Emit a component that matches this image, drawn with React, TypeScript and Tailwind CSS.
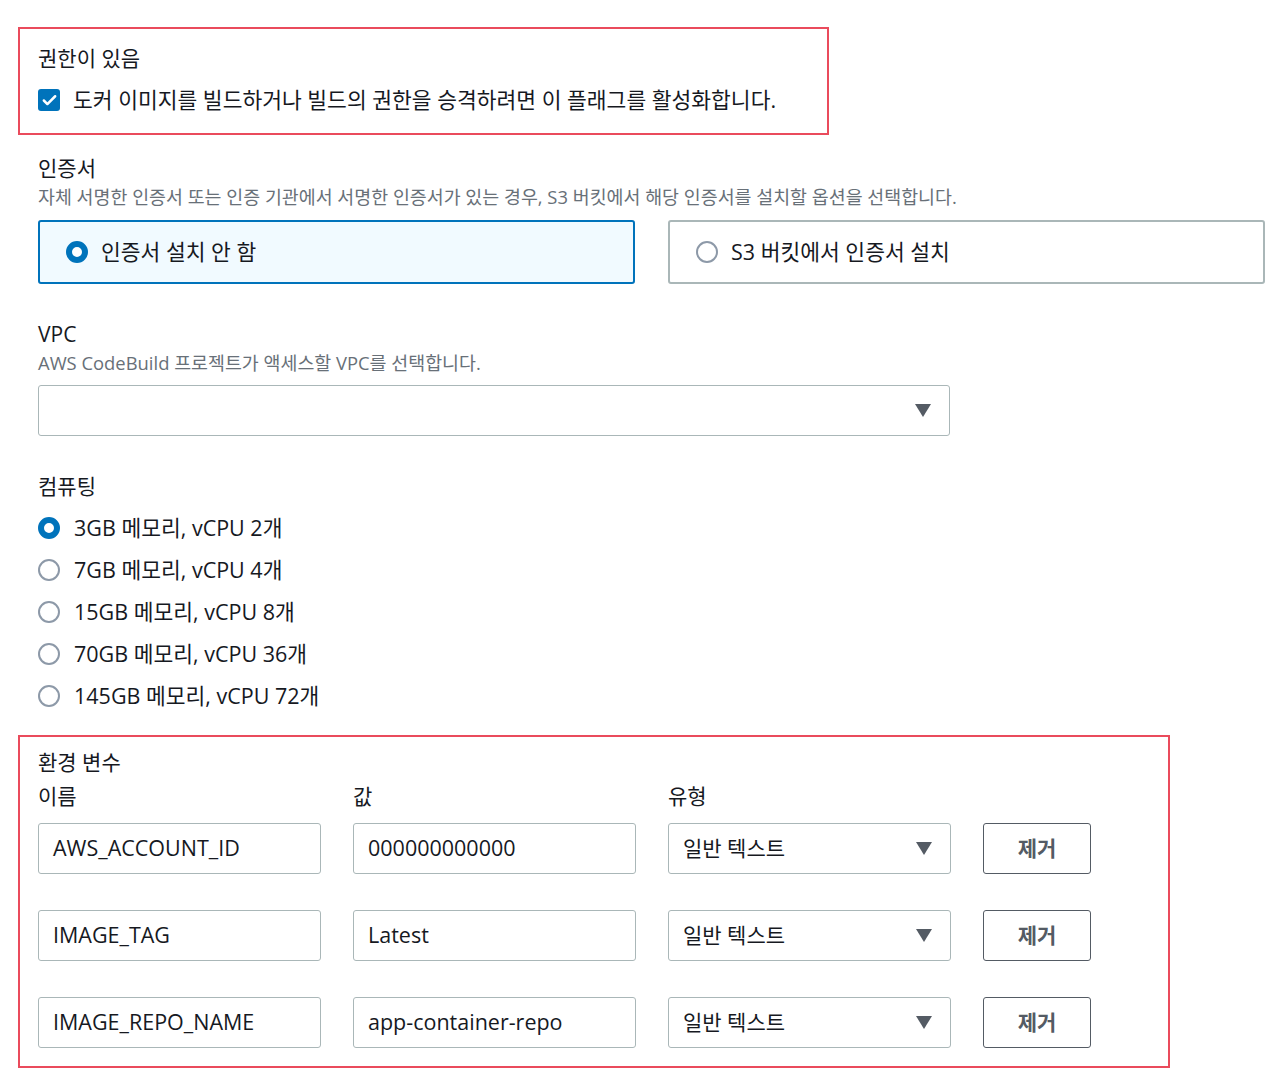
import { Check } from "lucide-react";

const font = { fontFamily: '"Open Sans", "Noto Sans CJK KR", sans-serif' };

const computeOptions = [
  "3GB 메모리, vCPU 2개",
  "7GB 메모리, vCPU 4개",
  "15GB 메모리, vCPU 8개",
  "70GB 메모리, vCPU 36개",
  "145GB 메모리, vCPU 72개",
];

const envVars = [
  { name: "AWS_ACCOUNT_ID", value: "000000000000" },
  { name: "IMAGE_TAG", value: "Latest" },
  { name: "IMAGE_REPO_NAME", value: "app-container-repo" },
];

function Radio({ checked }: { checked?: boolean }) {
  return checked ? (
    <span className="h-[22px] w-[22px] shrink-0 rounded-full border-[6px] border-[#0073bb] bg-white" />
  ) : (
    <span className="h-[22px] w-[22px] shrink-0 rounded-full border-2 border-[#8d99a8] bg-white" />
  );
}

function Caret() {
  return (
    <svg width="16" height="13" viewBox="0 0 16 13" aria-hidden>
      <path d="M0 0h16L8 13z" fill="#545b64" />
    </svg>
  );
}

function SelectBox({ text, width }: { text?: string; width: string }) {
  return (
    <div className={`flex h-[51px] items-center justify-between rounded-[3px] border border-[#aab7b8] bg-white pl-[14px] pr-[18px] ${width}`}>
      <span className="text-[21px] text-[#16191f]">{text}</span>
      <Caret />
    </div>
  );
}

function TextBox({ text }: { text: string }) {
  return (
    <div className="flex h-[51px] w-[283px] items-center rounded-[3px] border border-[#aab7b8] bg-white px-[14px] text-[21.5px] text-[#16191f]">
      {text}
    </div>
  );
}

export default function App() {
  return (
    <div className="min-h-[1091px] bg-white pl-[18px] pt-[27px] text-[#16191f]" style={font}>
      <div className="h-[108px] w-[811px] border-2 border-[#ea4b5c] pl-[18px] pt-[14px]">
        <p className="text-[21px] leading-[30px]">권한이 있음</p>
        <div className="mt-[12px] flex items-center gap-[13px]">
          <span className="flex h-[22px] w-[22px] items-center justify-center rounded-[3px] bg-[#0073bb]">
            <Check className="h-[17px] w-[17px] text-white" strokeWidth={3.5} />
          </span>
          <span className="text-[21.5px] leading-[30px]">도커 이미지를 빌드하거나 빌드의 권한을 승격하려면 이 플래그를 활성화합니다.</span>
        </div>
      </div>

      <div className="pl-[20px]">
        <div className="mt-[18px]">
          <p className="text-[21px] leading-[30px]">인증서</p>
          <p className="text-[18.4px] leading-[28px] text-[#687078]">
            자체 서명한 인증서 또는 인증 기관에서 서명한 인증서가 있는 경우, S3 버킷에서 해당 인증서를 설치할 옵션을 선택합니다.
          </p>
          <div className="mt-[9px] flex gap-[33px]">
            <div className="flex h-[64px] w-[597px] items-center gap-[13px] rounded-[3px] border-2 border-[#0073bb] bg-[#f1faff] pl-[26px]">
              <Radio checked />
              <span className="text-[21.5px]">인증서 설치 안 함</span>
            </div>
            <div className="flex h-[64px] w-[597px] items-center gap-[13px] rounded-[3px] border-2 border-[#aab7b8] bg-white pl-[26px]">
              <Radio />
              <span className="text-[21.5px]">S3 버킷에서 인증서 설치</span>
            </div>
          </div>
        </div>

        <div className="mt-[35px]">
          <p className="text-[21px] leading-[30px]">VPC</p>
          <p className="text-[18.4px] leading-[28px] text-[#687078]">AWS CodeBuild 프로젝트가 액세스할 VPC를 선택합니다.</p>
          <div className="mt-[8px]">
            <SelectBox width="w-[912px]" />
          </div>
        </div>

        <div className="mt-[35px]">
          <p className="text-[21px] leading-[30px]">컴퓨팅</p>
          <div className="mt-[12px] flex flex-col gap-[12px]">
            {computeOptions.map((opt, i) => (
              <div key={opt} className="flex h-[30px] items-center gap-[14px]">
                <Radio checked={i === 0} />
                <span className="text-[21.5px]">{opt}</span>
              </div>
            ))}
          </div>
        </div>
      </div>

      <div className="mt-[24px] h-[333px] w-[1152px] border-2 border-[#ea4b5c] pl-[18px] pt-[10px]">
        <p className="text-[21px] leading-[30px]">환경 변수</p>
        <div className="mt-[4px] flex text-[21px] leading-[30px]">
          <span className="w-[315px]">이름</span>
          <span className="w-[315px]">값</span>
          <span>유형</span>
        </div>
        <div className="mt-[12px] flex flex-col gap-[36px]">
          {envVars.map((v) => (
            <div key={v.name} className="flex gap-[32px]">
              <TextBox text={v.name} />
              <TextBox text={v.value} />
              <SelectBox text="일반 텍스트" width="w-[283px]" />
              <button className="h-[51px] w-[108px] rounded-[3px] border border-[#545b64] bg-white text-[21px] font-semibold text-[#545b64]">
                제거
              </button>
            </div>
          ))}
        </div>
      </div>
    </div>
  );
}
